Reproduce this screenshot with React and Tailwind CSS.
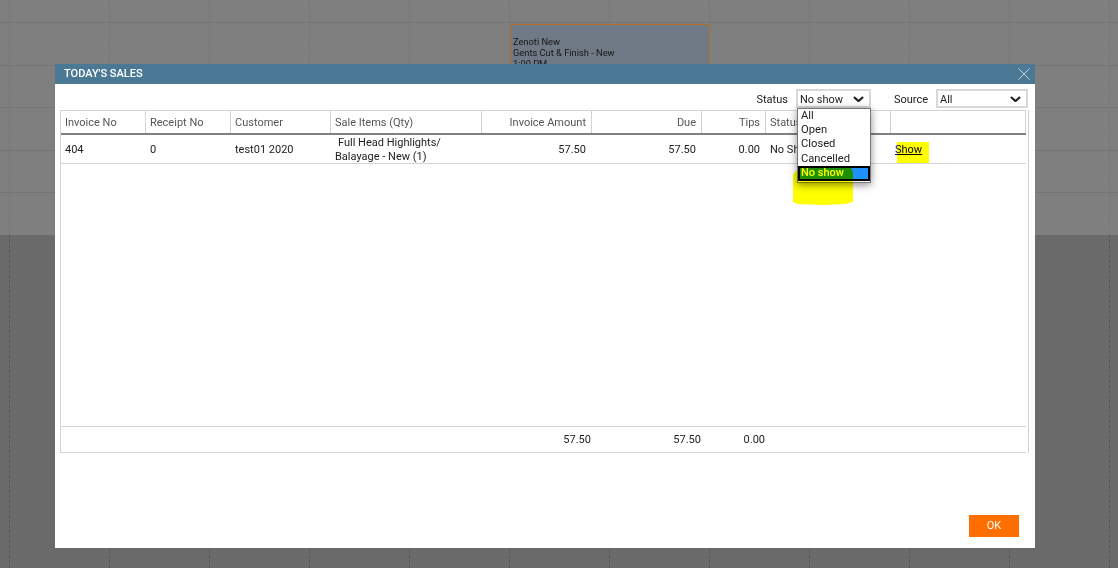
import React from 'react';

const COLS = 'grid grid-cols-[85px_85px_100px_151px_110px_110px_64px_125px_135px]';

const headers = [
  { label: 'Invoice No' },
  { label: 'Receipt No' },
  { label: 'Customer' },
  { label: 'Sale Items (Qty)' },
  { label: 'Invoice Amount', right: true },
  { label: 'Due', right: true },
  { label: 'Tips', right: true },
  { label: 'Status' },
  { label: '' },
];

const options = ['All', 'Open', 'Closed', 'Cancelled'];

function Chevron({ className }) {
  return (
    <svg className={className} viewBox="0 0 12 7" fill="none" stroke="#222222" strokeWidth="2.3">
      <path d="M1 1l5 4.6L11 1" />
    </svg>
  );
}

function DashedColumns({ lineClass }) {
  return (
    <div className="absolute inset-0 flex pl-[9px]">
      {Array.from({ length: 12 }).map((_, i) => (
        <div key={i} className={`h-full w-[100px] shrink-0 border-l border-dashed ${lineClass}`} />
      ))}
    </div>
  );
}

function Background() {
  return (
    <div className="absolute inset-0 flex flex-col">
      <div className="relative h-[235px] shrink-0 bg-[#7f7f7f] pt-[22px]">
        {[0, 1, 2, 3, 4].map((i) => (
          <div key={i} className="h-[42.5px] border-t border-[#747474]" />
        ))}
        <DashedColumns lineClass="border-[#757575]" />
      </div>
      <div className="relative flex-1 bg-[#6a6a6a]">
        <DashedColumns lineClass="border-[#555555]" />
      </div>
      {/* appointment behind the modal */}
      <div className="absolute left-[510px] top-[24px] h-[50px] w-[200px] rounded-[2px] border border-[#b56f28] bg-[#6f7a86] pl-[2px] pt-[11px] text-[9.3px] leading-[11px] text-[#161616]">
        <div>Zenoti New</div>
        <div>Gents Cut &amp; Finish - New</div>
        <div>1:00 PM</div>
      </div>
    </div>
  );
}

function SalesTable() {
  return (
    <div className="mx-[5px] flex h-[343px] w-[969px] flex-col border-x border-[#d3d3d3] pr-[2px]">
      <div className={`${COLS} h-[25px] shrink-0 border-t border-b-2 border-t-[#d3d3d3] border-b-[#808080] text-[#555555]`}>
        {headers.map((h, i) => (
          <div
            key={i}
            className={`flex items-center border-r border-[#d3d3d3] pt-[2px] ${h.right ? 'justify-end pr-[5px]' : 'px-[4px]'}`}
          >
            {h.label}
          </div>
        ))}
      </div>
      <div className={`${COLS} h-[29px] shrink-0 items-center border-b border-[#d3d3d3] pt-px`}>
        <div className="px-[4px]">404</div>
        <div className="px-[4px]">0</div>
        <div className="px-[4px]">test01 2020</div>
        <div className="px-[4px] leading-[14px]">
          <span className="pl-[3px]">Full Head Highlights/</span>
          <br />
          Balayage - New (1)
        </div>
        <div className="pr-[6px] text-right">57.50</div>
        <div className="pr-[6px] text-right">57.50</div>
        <div className="pr-[6px] text-right">0.00</div>
        <div className="px-[4px]">No Show</div>
        <div className="px-[4px]">
          <a className="text-[#0000ee] underline">Show</a>
        </div>
      </div>
      <div className="flex-1" />
      <div className={`${COLS} h-[27px] shrink-0 items-center border-y border-[#d3d3d3] pt-[2px]`}>
        <div className="col-span-4" />
        <div className="pr-px text-right">57.50</div>
        <div className="pr-px text-right">57.50</div>
        <div className="pr-px text-right">0.00</div>
      </div>
    </div>
  );
}

export default function App() {
  return (
    <div className="relative h-[568px] w-[1118px] overflow-hidden font-['Roboto',sans-serif] text-[11px] text-[#222222]">
      <Background />

      {/* Modal */}
      <div className="absolute left-[55px] top-[64px] flex h-[484px] w-[980px] flex-col bg-white">
        <div className="flex h-[20px] shrink-0 items-center justify-between bg-[#4b7995] pl-[9px] pr-[5px]">
          <span className="font-medium text-white">TODAY'S SALES</span>
          <svg className="h-[12px] w-[12px]" viewBox="0 0 12 12" stroke="#c4d2dc" strokeWidth="1" fill="none">
            <path d="M.5.5l11 11M11.5.5l-11 11" />
          </svg>
        </div>

        <div className="flex h-[26px] shrink-0 items-start justify-end pr-[7px] pt-[5px]">
          <span className="mr-[8px] mt-[3px]">Status</span>
          <div className="mr-[23px] flex h-[19px] w-[75px] items-center justify-between border-2 border-[#d8d8d8] pl-[2px] pr-[5px] pt-[3px]">
            No show
            <Chevron className="-mt-[2px] w-[11px]" />
          </div>
          <span className="mr-[8px] mt-[3px]">Source</span>
          <div className="flex h-[19px] w-[92px] items-center justify-between border-2 border-[#d8d8d8] pl-[2px] pr-[5px] pt-[3px]">
            All
            <Chevron className="-mt-[2px] w-[11px]" />
          </div>
        </div>

        <SalesTable />

        <div className="flex flex-1 items-end justify-end pb-[11px] pr-[16px]">
          <button className="h-[22px] w-[50px] bg-[#ff6f00] text-white">OK</button>
        </div>
      </div>

      {/* Open status dropdown */}
      <div className="absolute left-[797px] top-[108px] w-[74px] border border-[#777777] bg-white shadow-[0_2px_8px_rgba(0,0,0,0.45)]">
        <div className="flex flex-col text-[11.2px] leading-[14.2px]">
          {options.map((o) => (
            <div key={o} className="pl-[3px]">{o}</div>
          ))}
        </div>
        <div className="mb-px border-2 border-black bg-[#1e90ff] pb-px pl-px font-medium leading-[10px] text-white">No show</div>
      </div>

      {/* Highlighter marks */}
      <div className="absolute left-[897px] top-[142px] h-[21px] w-[32px] bg-[#ffff00] mix-blend-multiply" />
      <svg className="absolute left-[793px] top-[168px] mix-blend-multiply" width="60" height="37" viewBox="0 0 60 37">
        <path d="M7 0H58L60 4V34L52 36L30 37L4 36L0 34V6Z" fill="#ffff00" />
      </svg>
    </div>
  );
}
